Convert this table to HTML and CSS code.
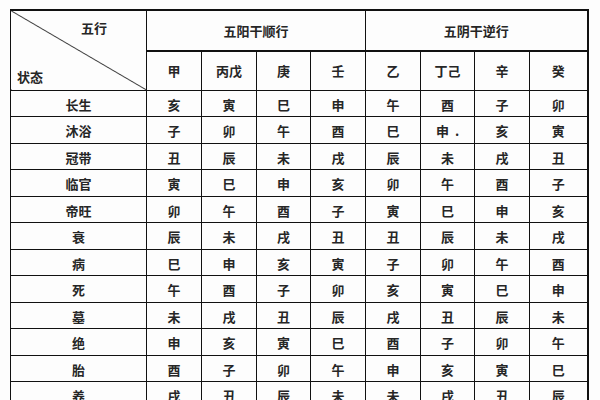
FILE: index.html
```html
<!DOCTYPE html>
<html lang="zh">
<head>
<meta charset="utf-8">
<link rel="stylesheet" href="styles.css">
</head>
<body>
<table class="tbl">
  <colgroup>
    <col class="c-label">
    <col class="c55"><col class="c55"><col class="c54"><col class="c55">
    <col class="c55"><col class="c54"><col class="c55"><col class="c58">
  </colgroup>
  <thead>
    <tr class="h1">
      <th class="corner" rowspan="2">
        <div class="corner-in">
          <span class="wx">五行</span>
          <span class="zt">状态</span>
        </div>
      </th>
      <th colspan="4">五阳干顺行</th>
      <th colspan="4">五阴干逆行</th>
    </tr>
    <tr class="h2">
      <th>甲</th><th>丙戊</th><th>庚</th><th>壬</th>
      <th>乙</th><th>丁己</th><th>辛</th><th>癸</th>
    </tr>
  </thead>
  <tbody>
    <tr><td>长生</td><td>亥</td><td>寅</td><td>巳</td><td>申</td><td>午</td><td>酉</td><td>子</td><td>卯</td></tr>
    <tr><td>沐浴</td><td>子</td><td>卯</td><td>午</td><td>酉</td><td>巳</td><td>申<span class="dot">.</span></td><td>亥</td><td>寅</td></tr>
    <tr><td>冠带</td><td>丑</td><td>辰</td><td>未</td><td>戌</td><td>辰</td><td>未</td><td>戌</td><td>丑</td></tr>
    <tr><td>临官</td><td>寅</td><td>巳</td><td>申</td><td>亥</td><td>卯</td><td>午</td><td>酉</td><td>子</td></tr>
    <tr><td>帝旺</td><td>卯</td><td>午</td><td>酉</td><td>子</td><td>寅</td><td>巳</td><td>申</td><td>亥</td></tr>
    <tr><td>衰</td><td>辰</td><td>未</td><td>戌</td><td>丑</td><td>丑</td><td>辰</td><td>未</td><td>戌</td></tr>
    <tr><td>病</td><td>巳</td><td>申</td><td>亥</td><td>寅</td><td>子</td><td>卯</td><td>午</td><td>酉</td></tr>
    <tr><td>死</td><td>午</td><td>酉</td><td>子</td><td>卯</td><td>亥</td><td>寅</td><td>巳</td><td>申</td></tr>
    <tr><td>墓</td><td>未</td><td>戌</td><td>丑</td><td>辰</td><td>戌</td><td>丑</td><td>辰</td><td>未</td></tr>
    <tr><td>绝</td><td>申</td><td>亥</td><td>寅</td><td>巳</td><td>酉</td><td>子</td><td>卯</td><td>午</td></tr>
    <tr><td>胎</td><td>酉</td><td>子</td><td>卯</td><td>午</td><td>申</td><td>亥</td><td>寅</td><td>巳</td></tr>
    <tr><td>养</td><td>戌</td><td>丑</td><td>辰</td><td>未</td><td>未</td><td>戌</td><td>丑</td><td>辰</td></tr>
  </tbody>
</table>
</body>
</html>
```

FILE: styles.css
```css
html, body {
  margin: 0;
  padding: 0;
  background: #fdfdfd;
  overflow: hidden;
  height: 400px;
}
body {
  padding: 9px 0 0 10px;
  box-sizing: border-box;
  font-family: "Noto Sans CJK SC", "Noto Sans", sans-serif;
  color: #262626;
}
.tbl {
  border-collapse: collapse;
  table-layout: fixed;
  width: 577px;
  font-size: 13px;
}
.c-label { width: 136px; }
.c55 { width: 55px; }
.c54 { width: 54px; }
.c58 { width: 58px; }
.tbl th, .tbl td {
  border: 1px solid #111;
  padding: 0;
  text-align: center;
  vertical-align: middle;
  font-weight: 700;
  line-height: 1;
}
.tbl thead th { border-top-width: 2px; }
.tbl tr > :last-child { border-right-width: 2px; }
.h1 { height: 41px; }
.h2 { height: 39px; }
.h2 th { border-top-width: 1px; }
.tbl tbody tr { height: 26.5px; }
.tbl tbody td { padding-top: 2px; }
.corner {
  background: linear-gradient(to top right,
    transparent calc(50% - 0.8px),
    #111 50%,
    transparent calc(50% + 0.8px));
}
.corner-in {
  height: 78px;
  display: flex;
  flex-direction: column;
  justify-content: space-between;
  align-items: flex-start;
  padding: 10px 0 6px 6px;
  box-sizing: border-box;
}
.wx { margin-left: 64px; }
.dot { margin-left: 6px; }
```
